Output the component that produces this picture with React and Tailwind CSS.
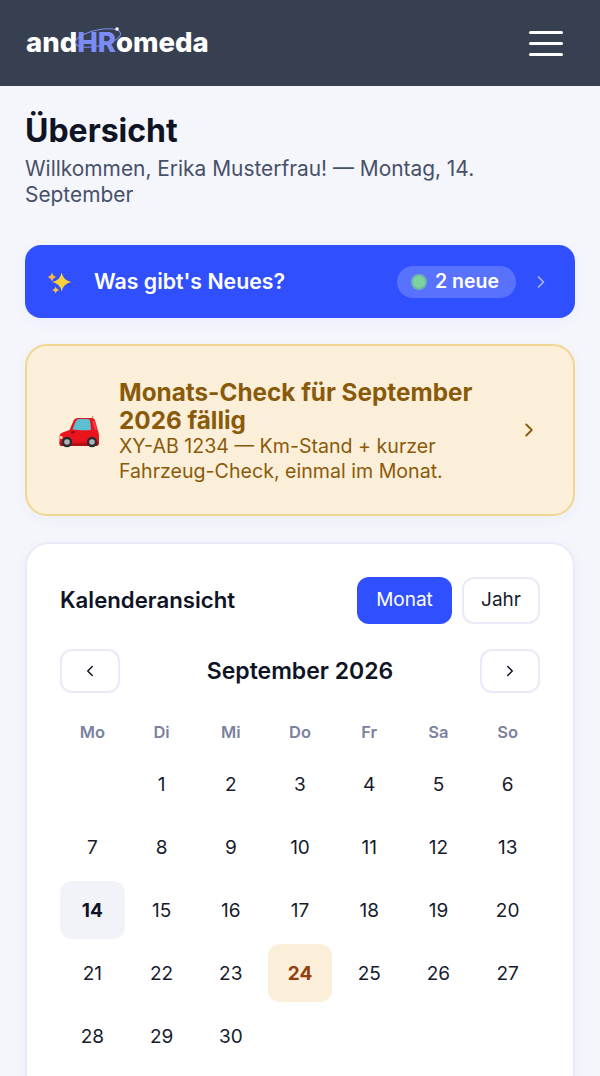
import React from "react";

const Chevron = ({ dir = "right", className = "" }) => (
  <svg viewBox="0 0 24 24" fill="none" stroke="currentColor" strokeWidth="2" strokeLinecap="round" strokeLinejoin="round" className={className}>
    <path d={dir === "right" ? "M9 6l6 6-6 6" : "M15 6l-6 6 6 6"} />
  </svg>
);

const Star = ({ cx, cy, r, fill }) => {
  const k = r * 0.16;
  return <path fill={fill} d={`M${cx} ${cy - r}Q${cx + k} ${cy - k} ${cx + r} ${cy}Q${cx + k} ${cy + k} ${cx} ${cy + r}Q${cx - k} ${cy + k} ${cx - r} ${cy}Q${cx - k} ${cy - k} ${cx} ${cy - r}Z`} />;
};

const Sparkles = () => (
  <svg viewBox="0 0 24 24" className="w-[24px] h-[24px] shrink-0">
    <Star cx={13.7} cy={12} r={9.5} fill="#fdd13a" />
    <Star cx={4} cy={7} r={4.8} fill="#f6b73c" />
    <Star cx={7.7} cy={20} r={3.8} fill="#fbc63c" />
  </svg>
);

const Car = () => (
  <svg viewBox="0 0 40 32" className="w-[40px] h-[32px] shrink-0">
    <path d="M33 3l1-3" stroke="#666" strokeWidth="0.7" />
    <path d="M0.500 27v-6c0-2.500 1-3.500 3-4.500l7-2.500 3.500-8c1-3 2.500-4 5-4h13c3 0 4 1.500 4.500 4l2.500 9c.7 2 1 3 1 6v6c0 2-1 2.500-3 2.500H3c-1.500 0-2.500-.5-2.500-2.500z" fill="#ea151c" />
    <path d="M0.500 26c6 1 33 1 39 0v1.500c0 2-1 2.500-3 2.500H3c-1.500 0-2.500-.5-2.500-3z" fill="#b80e14" />
    <path d="M13.500 13.500l3-7.500c.8-2 2-3 4-3h7.500c2 0 3 .8 3.200 2.500l.8 8.500c-6 .4-13 .3-18.500-.5z" fill="#5cc0d2" />
    <path d="M33.300 4.500l2.700 9.500h2l-2-7c-.5-1.700-1.200-2.500-2.700-2.500z" fill="#f34545" />
    <rect x="12" y="15" width="3.500" height="2.500" rx="1.200" fill="#8e0d12" />
    <rect x="0.600" y="20" width="3" height="3" rx="1" fill="#f9d0ac" />
    <circle cx="8" cy="26" r="5.200" fill="#2b2b2e" />
    <circle cx="8" cy="26" r="2.800" fill="#aeb2b7" />
    <circle cx="33" cy="26" r="5.200" fill="#2b2b2e" />
    <circle cx="33" cy="26" r="2.800" fill="#aeb2b7" />
  </svg>
);

const weeks = [
  ["", 1, 2, 3, 4, 5, 6],
  [7, 8, 9, 10, 11, 12, 13],
  [14, 15, 16, 17, 18, 19, 20],
  [21, 22, 23, 24, 25, 26, 27],
  [28, 29, 30, "", "", "", ""],
];

const Day = ({ d }) => {
  let cls = "text-[#161a2c] font-normal";
  if (d === 14) cls = "bg-[#f2f3f9] text-[#0f1425] font-bold";
  if (d === 24) cls = "bg-[#fbefd9] text-[#92400e] font-bold";
  return <div className={`h-[58px] pt-[2px] rounded-[12px] flex items-center justify-center text-[19px] ${cls}`}>{d}</div>;
};

export default function App() {
  return (
    <div className="w-[600px] h-[1076px] overflow-hidden bg-[#f5f6fc] font-['Inter',sans-serif]">
      <header className="h-[86px] bg-[#374050] flex items-center justify-between pl-[26px] pr-[37px]">
        <div className="relative flex items-baseline text-[27.500px] font-extrabold text-white leading-none font-['Inter',sans-serif]">
          <span>and</span>
          <span className="relative text-[#7c8cf5]">
            HR
            <svg viewBox="0 0 50 28" fill="none" className="absolute left-[-3px] top-[-5px] w-[50px] h-[28px]">
              <ellipse cx="24" cy="14" rx="23" ry="8" transform="rotate(-12 24 14)" stroke="#7c8cf5" strokeWidth="1" />
              <circle cx="43" cy="5" r="1.800" fill="#fff" />
            </svg>
          </span>
          <span>omeda</span>
        </div>
        <div className="flex flex-col gap-[8px]">
          <span className="block w-[34px] h-[3px] rounded-full bg-white" />
          <span className="block w-[34px] h-[3px] rounded-full bg-white" />
          <span className="block w-[34px] h-[3px] rounded-full bg-white" />
        </div>
      </header>

      <main className="px-[25px] pt-[25px]">
        <h1 className="text-[32px] leading-[40px] font-bold text-[#0f1425]">Übersicht</h1>
        <p className="mt-[5px] text-[20.900px] leading-[26px] text-[#475069]">
          Willkommen, Erika Musterfrau! — Montag, 14. September
        </p>

        <div className="mt-[37px] h-[73px] rounded-[16px] bg-[#304ffe] flex items-center pl-[23px] pr-[24px] shadow-[0_4px_14px_rgba(48,79,254,0.06)]">
          <Sparkles />
          <span className="ml-[22px] mt-[1px] text-[21.300px] font-semibold text-white">Was gibt's Neues?</span>
          <span className="ml-auto h-[32px] rounded-full bg-white/20 flex items-center pl-[14px] pr-[17px] gap-[8px] text-[19.500px] font-semibold text-white">
            <span className="w-[16px] h-[16px] rounded-full bg-[#7dd3a0] border-[2px] border-[#6fb7a8]" />
            2 neue
          </span>
          <Chevron className="ml-[15px] w-[20px] h-[20px] text-white/60" />
        </div>

        <div className="mt-[26px] h-[172px] rounded-[22px] bg-[#fbefd9] border-[2px] border-[#f2d590] flex items-center pl-[31px] pr-[33px] shadow-[0_4px_14px_rgba(30,40,90,0.04)]">
          <div className="mt-[3px] ml-[1px]"><Car /></div>
          <div className="ml-[20px] flex-1 min-w-0 mt-[2px]">
            <div className="text-[24.300px] leading-[28px] font-bold text-[#8a5a0b]">Monats-Check für September 2026 fällig</div>
            <div className="text-[19.600px] leading-[25px] text-[#8a5a0b]">XY-AB 1234 — Km-Stand + kurzer Fahrzeug-Check, einmal im Monat.</div>
          </div>
          <Chevron className="ml-[14px] w-[22px] h-[22px] text-[#8a5a0b]" />
        </div>

        <section className="mt-[26px] rounded-[24px] bg-white border-[2px] border-[#e8eaf7] px-[33px] pt-[32px] pb-[30px] shadow-[0_4px_14px_rgba(30,40,90,0.04)]">
          <div className="flex items-center h-[48px]">
            <h2 className="text-[22.200px] font-semibold text-[#0f1425]">Kalenderansicht</h2>
            <button className="ml-auto h-[47px] w-[95px] rounded-[12px] bg-[#304ffe] text-white text-[19px]">Monat</button>
            <button className="ml-[10px] h-[47px] w-[78px] rounded-[12px] bg-white border-[2px] border-[#e8eaf7] text-[#161a2c] text-[19px]">Jahr</button>
          </div>
          <div className="mt-[25px] flex items-center justify-between">
            <button className="h-[44px] w-[60px] rounded-[12px] bg-white border-[2px] border-[#e8eaf7] flex items-center justify-center text-[#0f1425]">
              <Chevron dir="left" className="w-[18px] h-[18px]" />
            </button>
            <div className="text-[23px] font-semibold text-[#0f1425]">September 2026</div>
            <button className="h-[44px] w-[60px] rounded-[12px] bg-white border-[2px] border-[#e8eaf7] flex items-center justify-center text-[#0f1425]">
              <Chevron className="w-[18px] h-[18px]" />
            </button>
          </div>
          <div className="mt-[24px] grid grid-cols-7 gap-x-[4.500px] text-center text-[16.500px] font-semibold text-[#7a829e]">
            {["Mo", "Di", "Mi", "Do", "Fr", "Sa", "So"].map((d) => (
              <div key={d} className="h-[30px] flex items-center justify-center">{d}</div>
            ))}
          </div>
          <div className="mt-[8px] grid grid-cols-7 gap-x-[4.500px] gap-y-[5px]">
            {weeks.flat().map((d, i) => <Day key={i} d={d} />)}
          </div>
        </section>
      </main>
    </div>
  );
}
